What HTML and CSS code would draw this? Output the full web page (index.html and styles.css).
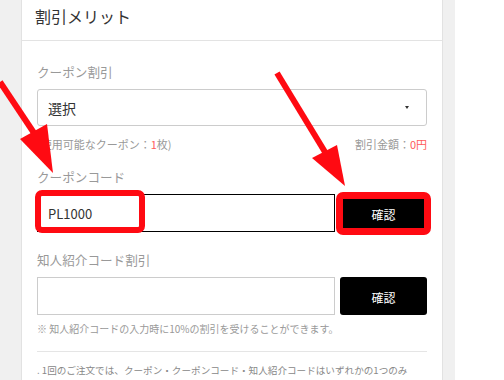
FILE: index.html
```html
<!DOCTYPE html>
<html lang="ja">
<head>
    <meta charset="UTF-8">
    <meta name="viewport" content="width=device-width, initial-scale=1.0">
    <title>割引メリット</title>
    <link rel="stylesheet" href="styles.css">
</head>
<body>
    <div class="page">
        <div class="card">
            <!-- Header -->
            <div class="card-head">割引メリット</div>

            <div class="card-body">
                <!-- Coupon select -->
                <div class="field">
                    <div class="label">クーポン割引</div>
                    <div class="select">
                        <span>選択</span>
                        <span class="caret"></span>
                    </div>
                    <div class="info-row">
                        <span>(使用可能なクーポン：<em>1</em>枚)</span>
                        <span>割引金額：<em>0円</em></span>
                    </div>
                </div>

                <!-- Coupon code -->
                <div class="field">
                    <div class="label label-code">クーポンコード</div>
                    <div class="code-row">
                        <input type="text" class="code-input dark" value="PL1000">
                        <button class="btn">確認</button>
                        <span class="mark mark-input"></span>
                        <span class="mark mark-btn"></span>
                    </div>
                </div>

                <!-- Friend referral code -->
                <div class="field">
                    <div class="label label-friend">知人紹介コード割引</div>
                    <div class="code-row">
                        <input type="text" class="code-input">
                        <button class="btn">確認</button>
                    </div>
                    <p class="note">※ 知人紹介コードの入力時に10%の割引を受けることができます。</p>
                </div>

                <div class="divider"></div>

                <p class="terms">. 1回のご注文では、クーポン・クーポンコード・知人紹介コードはいずれかの1つのみ</p>
            </div>
        </div>
    </div>

    <!-- Annotation arrows -->
    <svg class="arrows" width="504" height="380" viewBox="0 0 504 380">
        <line x1="0" y1="82" x2="36" y2="136" stroke="#ff0a12" stroke-width="6"/>
        <polygon points="20,139 47,124 53,173" fill="#ff0a12"/>
        <line x1="277" y1="73" x2="325" y2="152" stroke="#ff0a12" stroke-width="6"/>
        <polygon points="312,158 337,145 345,186" fill="#ff0a12"/>
    </svg>
</body>
</html>
```

FILE: styles.css
```css
/* General styling */
body, html {
    margin: 0;
    padding: 0;
    background: #fff;
    font-family: "Noto Sans CJK JP", "Noto Sans", sans-serif;
    color: #333;
}

.page {
    width: 422px;
    min-height: 380px;
    padding: 0 12px 0 21px;
    background: #f0f0f0;
}

.card {
    min-height: 380px;
    background: #fff;
    border-left: 1px solid #e2e2e2;
    border-right: 1px solid #e2e2e2;
}

.card-head {
    padding: 4px 13px 12px;
    font-size: 16px;
    line-height: 24px;
    color: #333;
    border-bottom: 1px solid #e3e3e3;
}

.card-body {
    padding: 22px 15px 0;
}

.label {
    font-size: 12.6px;
    line-height: 18px;
    color: #999;
    margin-bottom: 8px;
}

.label-code {
    margin-top: 16px;
}

.label-friend {
    margin-top: 19px;
}

/* Select box */
.select {
    box-sizing: border-box;
    height: 37px;
    display: flex;
    align-items: center;
    justify-content: space-between;
    padding: 0 17px 0 10px;
    border: 1px solid #ccc;
    border-radius: 3px;
    font-size: 14px;
    color: #333;
}

.caret {
    width: 0;
    height: 0;
    border-left: 2.5px solid transparent;
    border-right: 2.5px solid transparent;
    border-top: 3px solid #333;
}

.info-row {
    display: flex;
    justify-content: space-between;
    margin-top: 10px;
    font-size: 11px;
    line-height: 16px;
    color: #999;
}

.info-row em {
    font-style: normal;
    color: #ff5a5a;
}

/* Code rows */
.code-row {
    position: relative;
    display: flex;
    gap: 5px;
    height: 38px;
}

.code-input {
    box-sizing: border-box;
    width: 298px;
    height: 38px;
    margin: 0;
    padding: 0 10px;
    border: 1px solid #ccc;
    border-radius: 0;
    font-family: inherit;
    font-size: 13px;
    color: #333;
    outline: none;
}

.code-input.dark {
    border-color: #000;
}

.btn {
    width: 87px;
    height: 38px;
    padding: 3px 0 0;
    border: none;
    border-radius: 3px;
    background: #000;
    color: #fff;
    font-family: inherit;
    font-size: 12px;
}

/* Red highlight boxes */
.mark {
    position: absolute;
    box-sizing: border-box;
    border: 6px solid #ff0a12;
    border-radius: 7px;
}

.mark-input {
    left: -2px;
    top: -4px;
    width: 110px;
    height: 43px;
}

.mark-btn {
    left: 299px;
    top: -2px;
    width: 95px;
    height: 43px;
    border-width: 7px;
}

.note {
    margin: 7px 0 0;
    font-size: 10px;
    line-height: 14px;
    color: #999;
}

.divider {
    height: 1px;
    margin-top: 15px;
    background: #e5e5e5;
}

.terms {
    margin: 10px 0 0;
    font-size: 9.6px;
    line-height: 16px;
    color: #888;
    white-space: nowrap;
}

.arrows {
    position: absolute;
    top: 0;
    left: 0;
    pointer-events: none;
}
```
